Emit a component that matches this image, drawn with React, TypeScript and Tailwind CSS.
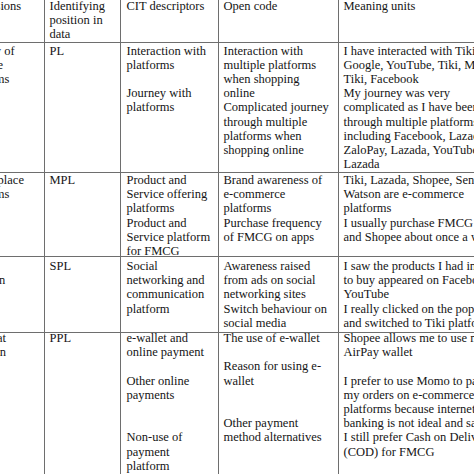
import React from "react";

type Row = {
    height: string;
    inner: string;
    cells: string[][];
};

// the table is a crop: first and last columns run past the edges of the picture
const rows: Row[] = [
    {
        height: "h-[45px]",
        inner: "pt-[1px]",
        cells: [
            ["Dimensions"],
            ["Identifying", "position in", "data"],
            ["CIT descriptors"],
            ["Open code"],
            ["Meaning units"],
        ],
    },
    {
        height: "h-[130px]",
        inner: "pt-[0.5px]",
        cells: [
            ["Journey of", "multiple", "platforms"],
            ["PL"],
            ["Interaction with", "platforms", "", "Journey with", "platforms"],
            [
                "Interaction with",
                "multiple platforms",
                "when shopping",
                "online",
                "Complicated journey",
                "through multiple",
                "platforms when",
                "shopping online",
            ],
            [
                "I have interacted with Tiki,",
                "Google, YouTube, Tiki, Momo,",
                "Tiki, Facebook",
                "My journey was very",
                "complicated as I have been",
                "through multiple platforms",
                "including Facebook, Lazada,",
                "ZaloPay, Lazada, YouTube,",
                "Lazada",
            ],
        ],
    },
    {
        height: "h-[84px]",
        inner: "pt-0",
        cells: [
            ["Marketplace", "platforms"],
            ["MPL"],
            [
                "Product and",
                "Service offering",
                "platforms",
                "Product and",
                "Service platform",
                "for FMCG",
            ],
            [
                "Brand awareness of",
                "e-commerce",
                "platforms",
                "Purchase frequency",
                "of FMCG on apps",
            ],
            [
                "Tiki, Lazada, Shopee, Sendo,",
                "Watson are e-commerce",
                "platforms",
                "I usually purchase FMCG on Tiki",
                "and Shopee about once a week",
            ],
        ],
    },
    {
        height: "h-[76px]",
        inner: "pt-[2px]",
        cells: [
            ["Social", "attention"],
            ["SPL"],
            ["Social", "networking and", "communication", "platform"],
            [
                "Awareness raised",
                "from ads on social",
                "networking sites",
                "Switch behaviour on",
                "social media",
            ],
            [
                "I saw the products I had intended",
                "to buy appeared on Facebook,",
                "YouTube",
                "I really clicked on the pop-up",
                "and switched to Tiki platform",
            ],
        ],
    },
    {
        height: "h-[160px]",
        inner: "-mt-[2px]",
        cells: [
            ["Wallet at", "selection"],
            ["PPL"],
            [
                "e-wallet and",
                "online payment",
                "",
                "Other online",
                "payments",
                "",
                "",
                "Non-use of",
                "payment",
                "platform",
            ],
            [
                "The use of e-wallet",
                "",
                "Reason for using e-",
                "wallet",
                "",
                "",
                "Other payment",
                "method alternatives",
            ],
            [
                "Shopee allows me to use my",
                "AirPay wallet",
                "",
                "I prefer to use Momo to pay",
                "my orders on e-commerce",
                "platforms because internet",
                "banking is not ideal and safe",
                "I still prefer Cash on Delivery",
                "(COD) for FMCG",
            ],
        ],
    },
];

const padLeft = ["pl-[5.5px]", "pl-[4.5px]", "pl-[5.5px]", "pl-[4.5px]", "pl-[4.5px]"];

const App: React.FC = () => {
    return (
        <div className="w-[474px] h-[474px] overflow-hidden bg-white">
            <div
                className="grid grid-cols-[89px_76px_98px_120px_200px] -ml-[44px] -mt-[2px] text-[12.5px] leading-[14.2px] text-[#151515]"
                style={{fontFamily: '"Liberation Serif", "Times New Roman", serif'}}
            >
                {rows.map((row, r) =>
                    row.cells.map((lines, c) => (
                        <div
                            key={`${r}-${c}`}
                            className={`${row.height} ${padLeft[c]} border-r border-b border-[#6e6e6e] overflow-hidden`}
                        >
                            <div className={row.inner}>
                                {lines.map((line, i) => (
                                    <div key={i} className="whitespace-nowrap">
                                        {line || "\u00a0"}
                                    </div>
                                ))}
                            </div>
                        </div>
                    ))
                )}
            </div>
        </div>
    );
};

export default App;
